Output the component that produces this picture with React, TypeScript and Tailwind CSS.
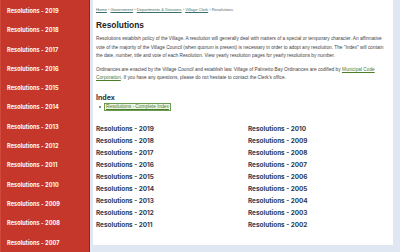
import React from "react";

const sideYears = [2019, 2018, 2017, 2016, 2015, 2014, 2013, 2012, 2011, 2010, 2009, 2008, 2007];
const leftCol = [2019, 2018, 2017, 2016, 2015, 2014, 2013, 2012, 2011];
const rightCol = [2010, 2009, 2008, 2007, 2006, 2005, 2004, 2003, 2002];

export default function App() {
  return (
    <div className="w-[400px] h-[252px] overflow-hidden bg-[#dfe7f3] flex" style={{ fontFamily: "'Liberation Sans', Arial, sans-serif" }}>
      <div className="w-[90px] h-[252px] bg-[#c4372a] border-r border-[#9e1f1a] border-l border-l-[#d04a3c] flex flex-col pt-[1.5px] shrink-0">
        {sideYears.map((y) => (
          <div key={y} className="h-[19.3px] shrink-0 flex items-center pl-[6px] text-white font-bold text-[5.6px] tracking-[0.05px]" style={{ fontFamily: "Inter, 'Open Sans', sans-serif" }}>
            Resolutions - {y}
          </div>
        ))}
      </div>
      <div className="ml-[3px] w-[300px] h-[245px] bg-white pl-[3px] pr-[6px] pt-[7px] text-[#333]">
        <div className="text-[4.1px] text-[#666] leading-[6px]">
          <span className="text-[#3d6f6a] underline">Home</span> › <span className="text-[#3d6f6a] underline">Government</span> › <span className="text-[#3d6f6a] underline">Departments &amp; Divisions</span> › <span className="text-[#3d6f6a] underline">Village Clerk</span> › Resolutions
        </div>
        <div className="mt-[7px] text-[8.4px] font-bold text-[#222] leading-[10px]">Resolutions</div>
        <p className="mt-[5px] text-[4.75px] leading-[8.5px] text-[#444]">
          Resolutions establish policy of the Village. A resolution will generally deal with matters of a special or temporary character. An affirmative vote of the majority of the Village Council (when quorum is present) is necessary in order to adopt any resolution. The "Index" will contain the date, number, title and vote of each Resolution. View yearly resolution pages for yearly resolutions by number.
        </p>
        <p className="mt-[5px] text-[4.75px] leading-[8.5px] text-[#444]">
          Ordinances are enacted by the Village Council and establish law. Village of Palmetto Bay Ordinances are codified by <span className="text-[#4c7d2a] underline">Municipal Code Corporation</span>. If you have any questions, please do not hesitate to contact the Clerk's office.
        </p>
        <div className="mt-[10px] text-[7px] font-bold text-[#2d3748] leading-[9px]" style={{ fontFamily: "Inter, 'Open Sans', sans-serif" }}>Index</div>
        <div className="mt-[1px] flex items-center pl-[3px] gap-[3px]">
          <span className="w-[2px] h-[2px] rounded-full bg-[#666]" />
          <span className="text-[4.8px] leading-[6px] px-[1px] border border-[#6b9a52] bg-[#eef5e6] text-[#4c7d2a] underline">Resolutions - Complete Index</span>
        </div>
        <div className="mt-[13px] grid grid-cols-[152px_1fr]">
          <div className="flex flex-col">
            {leftCol.map((y) => (
              <div key={y} className="h-[12px] flex items-center text-[6.4px] font-bold text-[#2e3a4f]" style={{ fontFamily: "Inter, 'Open Sans', sans-serif" }}>
                Resolutions - {y}
              </div>
            ))}
          </div>
          <div className="flex flex-col">
            {rightCol.map((y) => (
              <div key={y} className="h-[12px] flex items-center text-[6.4px] font-bold text-[#2e3a4f]" style={{ fontFamily: "Inter, 'Open Sans', sans-serif" }}>
                Resolutions - {y}
              </div>
            ))}
          </div>
        </div>
      </div>
    </div>
  );
}
